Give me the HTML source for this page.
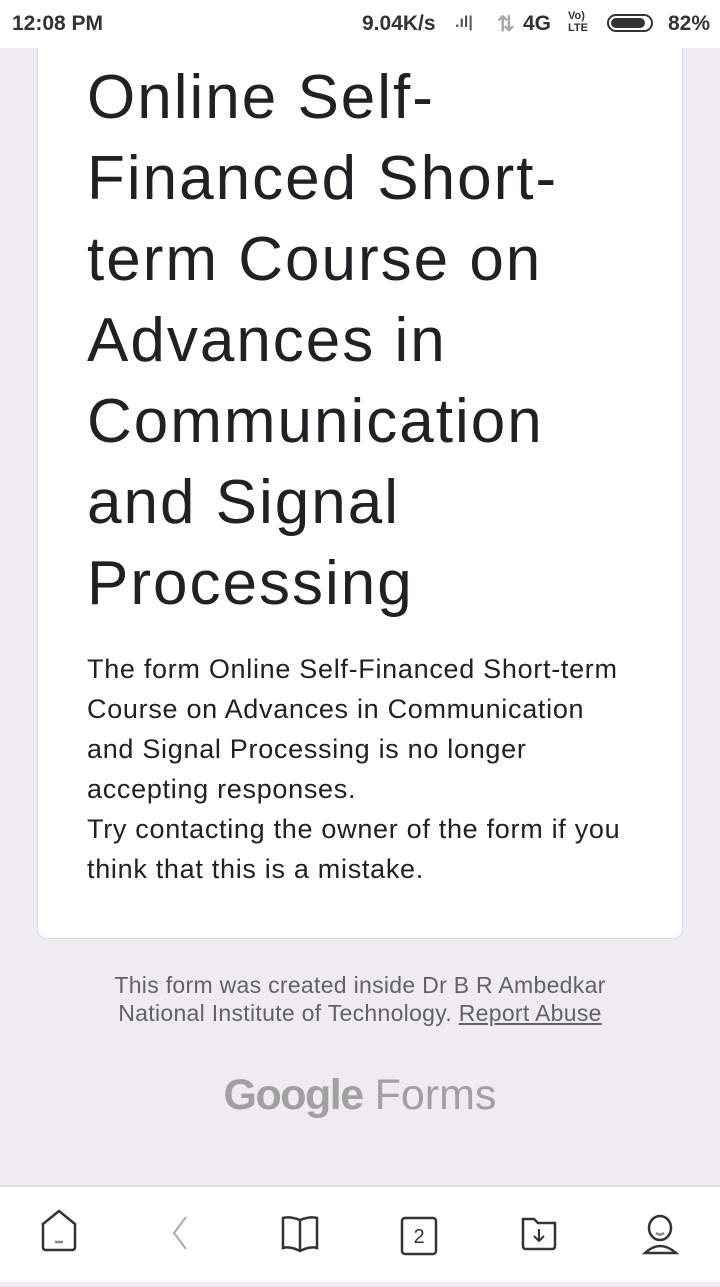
<!DOCTYPE html>
<html><head><meta charset="utf-8"><style>
body{margin:0;width:720px;height:1280px;background:#f0ebf0;font-family:"Liberation Sans",sans-serif;position:relative;overflow:hidden}
.sb{position:absolute;top:0;left:0;width:720px;height:48px;background:#fff;font-weight:bold;font-size:21px;color:#333;z-index:5}
.card{position:absolute;left:37px;top:20px;width:644px;height:917px;background:#fff;border:1px solid #dadce0;border-radius:10px}
h1{position:absolute;left:87px;top:57px;margin:0;font-weight:normal;font-size:62px;line-height:81px;color:#202124;white-space:nowrap;letter-spacing:2px}
.d{position:absolute;left:87px;top:649px;font-size:27px;line-height:40px;color:#202124;white-space:nowrap;letter-spacing:0.7px}
.f{position:absolute;top:971px;width:720px;text-align:center;font-size:23px;line-height:28px;color:#5f6368;letter-spacing:0.3px}
.g{position:absolute;top:1071px;width:720px;text-align:center;font-size:43px;color:#a0a0a0}
.nav{position:absolute;top:1185px;left:0;width:720px;height:95px;background:#fff;border-top:2px solid #e0e0e0}
</style></head><body>
<div class="sb"><span style="position:absolute;left:12px;top:12px">12:08 PM</span>
<span style="position:absolute;left:362px;top:12px">9.04K/s</span>
<span style="position:absolute;left:455px;top:14px;font-size:16px;color:#555">.ıl|</span>
<span style="position:absolute;left:497px;top:12px;color:#aaa">⇅</span>
<span style="position:absolute;left:523px;top:12px">4G</span>
<span style="position:absolute;left:568px;top:10px;font-size:11px;line-height:12px">Vo)<br>LTE</span>
<div style="position:absolute;left:607px;top:14px;width:46px;height:18px;border:2px solid #333;border-radius:10px;box-sizing:border-box"><div style="margin:2px;width:34px;height:10px;background:#333;border-radius:5px"></div></div>
<span style="position:absolute;left:668px;top:12px">82%</span></div>
<div class="card"></div>
<h1>Online Self-<br>Financed Short-<br>term Course on<br>Advances in<br>Communication<br>and Signal<br>Processing</h1>
<div class="d">The form Online Self-Financed Short-term<br>Course on Advances in Communication<br>and Signal Processing is no longer<br>accepting responses.<br>Try contacting the owner of the form if you<br>think that this is a mistake.</div>
<div class="f">This form was created inside Dr B R Ambedkar<br>National Institute of Technology. <u>Report Abuse</u></div>
<div class="g"><b style="letter-spacing:-1.5px">Google</b> Forms</div>
<div class="nav">
<svg width="720" height="95" fill="none" stroke="#333" stroke-width="2.5">
<path d="M43 60V37l16-13 16 13v23q0 3-3 3H46q-3 0-3-3z"/><path d="M55 55h8" stroke="#888"/>
<path d="M186 30l-12 16 12 16" stroke="#aaa" stroke-width="2"/>
<path d="M300 33q-10-4-17-2v30q7-2 17 3q10-5 17-3V31q-7-2-17 2zM300 33v31"/>
<rect x="402" y="31" width="34" height="36" rx="3"/><text x="419" y="56" text-anchor="middle" font-size="20" fill="#333" stroke="none" font-family="Liberation Sans">2</text>
<path d="M523 32h11l4 4h17v23q0 3-3 3h-26q-3 0-3-3z"/><path d="M539 42v12m-5-5l5 5 5-5" stroke-width="2"/>
<ellipse cx="660" cy="41" rx="11" ry="12"/><path d="M645 66q15-14 31 0z"/><path d="M656 46q4 3 8 0" stroke="#888"/>
</svg></div>
</body></html>
